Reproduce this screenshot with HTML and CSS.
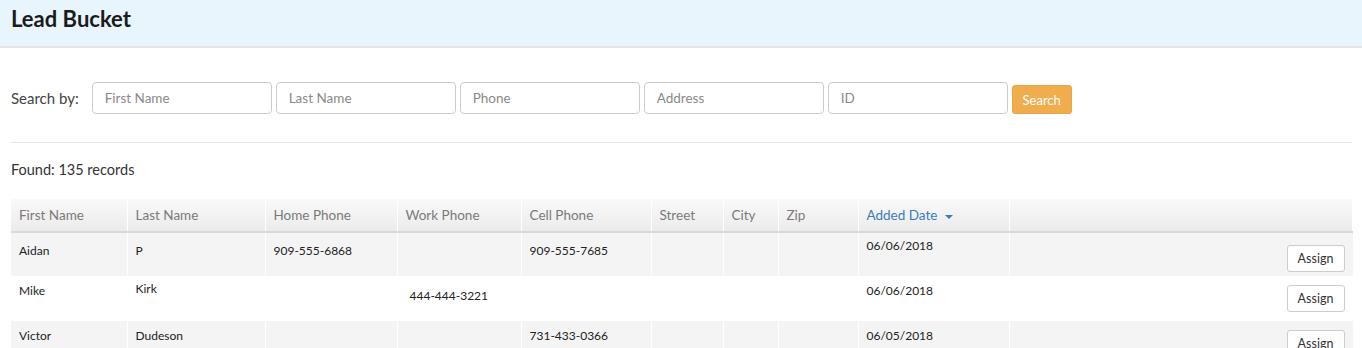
FILE: index.html
```html
<!DOCTYPE html>
<html>
<head lang="en">
  <meta charset="UTF-8">
  <title>Lead Bucket</title>
  <link rel="stylesheet" href="styles.css">
</head>
<body>
<div class="page-header"><h1 class="page-title">Lead Bucket</h1></div>
<div class="page-content">
  <form class="search-bar" action="javascript:void(0);">
    <label class="search-label">Search by:</label>
    <input type="text" class="search-input" placeholder="First Name" name="first_name">
    <input type="text" class="search-input" placeholder="Last Name" name="last_name">
    <input type="text" class="search-input" placeholder="Phone" name="phone">
    <input type="text" class="search-input" placeholder="Address" name="address">
    <input type="text" class="search-input" placeholder="ID" name="id">
    <button type="submit" class="search-button">Search</button>
  </form>
  <div class="found-count">Found: 135 records</div>
  <table class="leads">
    <thead>
    <tr>
      <th class="col-first">First Name</th>
      <th class="col-last">Last Name</th>
      <th class="col-home">Home Phone</th>
      <th class="col-work">Work Phone</th>
      <th class="col-cell">Cell Phone</th>
      <th class="col-street">Street</th>
      <th class="col-city">City</th>
      <th class="col-zip">Zip</th>
      <th class="col-date"><a href="javascript:void(0);" class="sort-link">Added Date <span class="sort-caret"></span></a></th>
      <th class="col-action"></th>
    </tr>
    </thead>
    <tbody>
    <tr class="row-first">
      <td>Aidan</td>
      <td>P</td>
      <td>909-555-6868</td>
      <td></td>
      <td>909-555-7685</td>
      <td></td>
      <td></td>
      <td></td>
      <td class="cell-raise">06/06/2018</td>
      <td class="cell-action"><a href="javascript:void(0);" class="assign-button">Assign</a></td>
    </tr>
    <tr class="row-second">
      <td>Mike</td>
      <td class="cell-raise">Kirk</td>
      <td></td>
      <td class="cell-drop">444-444-3221</td>
      <td></td>
      <td></td>
      <td></td>
      <td></td>
      <td>06/06/2018</td>
      <td class="cell-action"><a href="javascript:void(0);" class="assign-button">Assign</a></td>
    </tr>
    <tr>
      <td>Victor</td>
      <td>Dudeson</td>
      <td></td>
      <td></td>
      <td>731-433-0366</td>
      <td></td>
      <td></td>
      <td></td>
      <td>06/05/2018</td>
      <td class="cell-action"><a href="javascript:void(0);" class="assign-button">Assign</a></td>
    </tr>
    </tbody>
  </table>
</div>
</body>
</html>
```

FILE: styles.css
```css
html, body {
  margin: 0px;
  padding: 0px;
}

body {
  font-family: Lato, "Open Sans", "Liberation Sans", sans-serif;
  color: #333333;
  background: #ffffff;
}

h1, form, table {
  margin: 0px;
  padding: 0px;
}

a {
  text-decoration: none;
}

.page-header {
  height: 46px;
  background: #e8f5fd;
  border-bottom: 2px solid #e2e6e9;
  padding: 0px 11px;
}

.page-title {
  font-size: 22px;
  line-height: 38px;
  font-weight: 700;
  color: #1b1b1b;
}

.page-content {
  padding: 0px 10px 0px 11px;
}

.search-bar {
  display: flex;
  align-items: center;
  gap: 4px;
  margin-top: 34px;
  padding-bottom: 28px;
  border-bottom: 1px solid #e6e6e6;
}

.search-label {
  font-size: 15px;
  color: #444444;
  margin-right: 9px;
}

.search-input {
  box-sizing: border-box;
  width: 180px;
  height: 32px;
  border: 1px solid #cccccc;
  border-radius: 4px;
  padding: 0px 12px;
  font-family: inherit;
  font-size: 13.5px;
  color: #333333;
}

.search-input::placeholder {
  color: #8a8a8a;
}

.search-button {
  box-sizing: border-box;
  height: 29px;
  width: 60px;
  margin-top: 3px;
  background: #f0ad4e;
  border: 1px solid #eda445;
  border-radius: 3px;
  color: #ffffff;
  font-family: inherit;
  font-size: 13px;
}

.found-count {
  font-size: 14.5px;
  line-height: 20px;
  margin: 17px 0px 19px 0px;
  color: #333333;
}

.leads {
  width: 1342px;
  table-layout: fixed;
  border-collapse: collapse;
}

.leads th,
.leads td {
  box-sizing: border-box;
}

.leads th {
  height: 33px;
  padding: 0px 8px;
  text-align: left;
  font-size: 13.5px;
  font-weight: 400;
  color: #7a7a7a;
  background: linear-gradient(#f9f9f9, #ebebeb);
  border-right: 1px solid #ffffff;
  border-bottom: 2px solid #d9d9d9;
}

.leads .col-first { width: 116px; }
.leads .col-last { width: 138px; }
.leads .col-home { width: 132px; }
.leads .col-work { width: 124px; }
.leads .col-cell { width: 130px; }
.leads .col-street { width: 72px; }
.leads .col-city { width: 55px; }
.leads .col-zip { width: 80px; }
.leads .col-date { width: 151px; }

.sort-link {
  color: #3a7cc1;
}

.sort-caret {
  display: inline-block;
  margin-left: 4px;
  vertical-align: middle;
  border-top: 4px solid #3a7cc1;
  border-left: 4px solid transparent;
  border-right: 4px solid transparent;
}

.leads tbody tr {
  height: 45px;
}

.leads .row-first {
  height: 44px;
}

.leads tbody tr:nth-child(odd) {
  background: #f4f4f4;
}

.leads td {
  padding: 7px 8px 0px 8px;
  vertical-align: top;
  font-size: 12px;
  line-height: 16px;
  color: #222222;
  border-right: 1px solid #ffffff;
}

.leads .row-first td {
  padding-top: 10px;
}

.leads td.cell-raise,
.leads .row-first td.cell-raise {
  padding-top: 5px;
}

.leads td.cell-drop {
  padding-top: 12px;
  padding-left: 12px;
}

.leads td.cell-action {
  padding-top: 9px;
  text-align: right;
  border-right: none;
}

.leads .row-first td.cell-action {
  padding-top: 12px;
}

.assign-button {
  display: inline-block;
  box-sizing: border-box;
  width: 58px;
  height: 27px;
  line-height: 25px;
  text-align: center;
  font-size: 12.5px;
  color: #333333;
  background: #ffffff;
  border: 1px solid #cccccc;
  border-radius: 3px;
}
```
